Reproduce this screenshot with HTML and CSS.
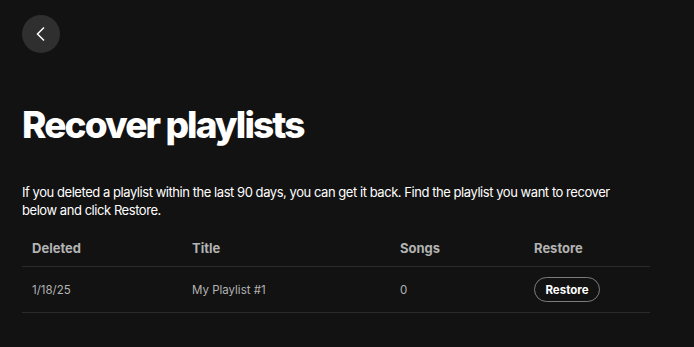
FILE: index.html
```html
<!DOCTYPE html>
<html>
  <head>
    <title>Recover playlists</title>
    <meta name="viewport" content="width=device-width, initial-scale=1" />
    <link rel="stylesheet" href="styles.css">
  </head>
  <body>
    <div class="page">
      <button class="back-btn" aria-label="Go back">
        <svg width="16" height="16" viewBox="0 0 16 16">
          <path d="M11 1.5 L4.5 8 L11 14.5" fill="none" stroke="#ffffff" stroke-width="1.5" />
        </svg>
      </button>
      <h1>Recover playlists</h1>
      <p class="intro">
        If you deleted a playlist within the last 90 days, you can get it back. Find the playlist you want to recover
        below and click Restore.
      </p>
      <div class="table">
        <div class="row head">
          <div>Deleted</div>
          <div>Title</div>
          <div>Songs</div>
          <div>Restore</div>
        </div>
        <div class="row">
          <div>1/18/25</div>
          <div>My Playlist #1</div>
          <div>0</div>
          <div><button class="restore">Restore</button></div>
        </div>
      </div>
    </div>
  </body>
</html>
```

FILE: styles.css
```css
body {
  margin: 0;
  background-color: #121212;
  color: #ffffff;
  font-family: Inter, "Noto Sans", sans-serif;
}
.page {
  padding: 15px 44px 0 22px;
}
.back-btn {
  width: 38px;
  height: 38px;
  border-radius: 50%;
  border: none;
  background-color: #2f2f2f;
  display: flex;
  align-items: center;
  justify-content: center;
  padding: 0;
  cursor: pointer;
}
h1 {
  margin: 50px 0 0;
  font-size: 37px;
  font-weight: 800;
  letter-spacing: -1.9px;
  line-height: 44px;
}
.intro {
  margin: 36px 0 0;
  font-size: 13px;
  line-height: 18px;
  letter-spacing: -0.45px;
  width: 615px;
}
.table {
  margin-top: 13px;
  width: 628px;
}
.row {
  display: grid;
  grid-template-columns: 160px 208px 134px 126px;
  align-items: center;
  border-bottom: 1px solid #2b2b2b;
  font-size: 11.5px;
  color: #b3b3b3;
  height: 46px;
  box-sizing: border-box;
}
.row > div {
  padding-left: 10px;
}
.row.head {
  font-size: 13px;
  font-weight: 700;
  height: 35px;
  padding-bottom: 3px;
}
.restore {
  background: transparent;
  border: 1px solid #7c7c7c;
  border-radius: 13px;
  color: #ffffff;
  font-family: inherit;
  font-weight: 700;
  font-size: 11.5px;
  width: 66px;
  height: 25px;
  padding: 0;
  cursor: pointer;
}
```
